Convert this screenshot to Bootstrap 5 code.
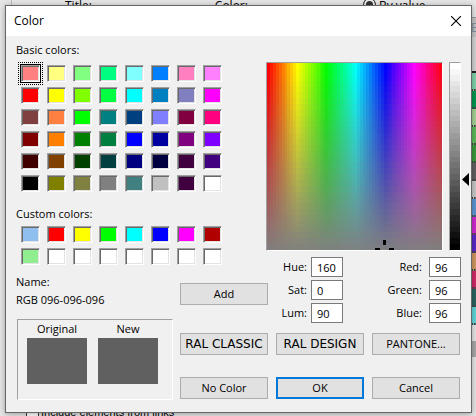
<!DOCTYPE html>
<html lang="en">
<head>
<meta charset="utf-8">
<meta name="viewport" content="width=device-width, initial-scale=1">
<title>Color</title>
<link href="https://cdn.jsdelivr.net/npm/bootstrap@5.3.0/dist/css/bootstrap.min.css" rel="stylesheet">
<style>
body{font:11px/16px "Open Sans","Noto Sans",sans-serif;color:#000;background:#e6e6e6}
.backdrop-app{height:100vh;min-height:416px}
.app-top{height:48px;border-left:1px solid #bbb;margin-left:11px;padding-left:53px;margin-right:5px}
.app-top .gap-a{margin-left:123px}
.app-top label{font-size:12px;line-height:11px}
.app-top .form-check-input{width:13px;height:13px;margin:-2px 3px 0 0;border:1px solid #333;background:#333;box-shadow:inset 0 0 0 2px #eee}
.by{margin-left:115px}
.app-list{width:5px;padding-top:17px}
.app-list .hd{height:20px;background:#c4c4c4;color:#8090a0;overflow:hidden;font-size:12px;line-height:20px;border-top:1px solid #999}
.app-list .sp{height:36px;border-bottom:2px solid #222;background:#d4d4d4}
.app-list i{display:block;height:18px;border-bottom:2px dotted #444}
.app-list .bar{height:16px;margin-top:16px;background:#a8a8a8}
.app-foot{padding-left:26px;overflow:hidden;height:10px}
.app-foot label{font:11px/13px "Liberation Sans",sans-serif}
.app-foot .form-check-input{width:13px;height:13px;margin:0 2px 0 0;border:1px solid #333;border-radius:0}
.dialog{position:absolute;inset:5px 4px auto 5px;border:1px solid #666;background:#f0f0f0;box-shadow:0 1px 6px #0005}
.titlebar{height:30px;font-size:12px;padding:0 10px 0 8px}
.titlebar button{line-height:0}
.dbody{padding:6px 10px 12px 10px}
.left{width:157px;margin-right:7px}
.swatches{display:grid;grid-template-columns:repeat(8,19px);gap:5px 7px;padding-left:5px}
.sw,.sunk{border:1px solid;border-color:#a0a0a0 #fff #fff #a0a0a0}
.sw{position:relative;height:17px;padding:0;border-radius:0;box-shadow:inset 1px 1px #696969,inset -1px -1px #e3e3e3}
.sw.on{outline:1px solid #000}
.sw.on::after{content:"";position:absolute;inset:-4px;border:1px dotted #000}
.t7{margin-top:7px}.t14{margin-top:14px}.t4{margin-top:4px}.t9{margin-top:9px}.t2{margin-top:2px}.t11{margin-top:11px}
.preview{height:81px;margin-left:1px;padding:1px 14px 0 9px;gap:11px}
.preview .fill{height:46px;background:#606060;margin-top:1px}
.pick{margin-top:20px;gap:6px}
.spectrum{position:relative;width:177px;height:189px}
.spectrum canvas,.lum canvas{display:block;width:100%;height:100%;image-rendering:pixelated}
.spectrum svg{position:absolute;right:46px;bottom:0}
.lum{position:relative;width:12px;height:189px}
.lum svg{position:absolute;left:12px;top:110px}
.fields{margin-top:6px}
.fields .btn{margin-top:26px}
.fld{display:grid;grid-template-columns:39px 32px;gap:3px 4px;line-height:20px;text-align:right}
.fld.rgb{column-gap:7px}
.fld input{width:32px;height:20px;padding:0 0 0 5px;border:1px solid #7a7a7a;border-radius:0;background:#fff;font-size:11px;line-height:18px;min-height:0;color:#000}
.btn.b{width:100%;height:22px;padding:0;border:1px solid #adadad;border-radius:0;background:#e1e1e1;color:#000;font-size:11px;line-height:20px;white-space:nowrap}
.btn.b.add{width:88px}
.btn.b.wide{font:12px/20px "DejaVu Sans",sans-serif}
.btn.b.ok{border:2px solid #0078d7;line-height:18px}
.acts{display:grid;grid-template-columns:repeat(3,1fr);gap:22px 8px;margin-top:10px;padding-right:1px}
</style>
<script src="https://cdn.jsdelivr.net/npm/bootstrap@5.3.0/dist/js/bootstrap.bundle.min.js"></script>
</head>
<body>
<div class="backdrop-app d-flex overflow-hidden">
  <div class="flex-grow-1 d-flex flex-column justify-content-between">
    <div class="app-top d-flex align-items-start">
      <label>Title:</label><label class="gap-a">Color:</label>
      <div class="by d-flex"><input class="form-check-input" type="radio" id="byv" checked><label for="byv">By value</label></div>
    </div>
    <div class="app-foot d-flex"><input class="form-check-input" type="checkbox" id="inc"><label for="inc">Include elements from links</label></div>
  </div>
  <div class="app-list" id="list"><div class="hd">E</div><div class="sp"></div></div>
</div>

<main class="dialog" role="dialog" aria-labelledby="ttl">
  <div class="titlebar bg-white d-flex align-items-center justify-content-between">
    <span id="ttl">Color</span>
    <button class="border-0 bg-transparent p-0" aria-label="Close"><svg width="10" height="10" viewBox="0 0 10 10"><path d="M0 0l10 10M10 0L0 10" stroke="#000" stroke-width="1.1"/></svg></button>
  </div>
  <div class="dbody d-flex">
    <section class="left flex-shrink-0">
      <div>Basic colors:</div>
      <div class="swatches t7" id="basic"></div>
      <div class="t14">Custom colors:</div>
      <div class="swatches t4" id="custom"></div>
      <div class="t9">Name:</div>
      <div class="t2">RGB 096-096-096</div>
      <div class="preview sunk d-flex t11 text-center">
        <div class="flex-fill w-50">Original<div class="fill"></div></div>
        <div class="flex-fill w-50">New<div class="fill"></div></div>
      </div>
    </section>
    <section class="flex-grow-1">
      <div class="pick d-flex justify-content-end">
        <div class="spectrum sunk"><canvas id="spec" width="60" height="32"></canvas>
          <svg width="22" height="12" viewBox="0 0 22 12"><path d="M9 2h3v5H9zM1 10h5v2H1zM15 10h5v2h-5z"/></svg></div>
        <div class="lum sunk"><canvas id="lum" width="1" height="32"></canvas>
          <svg width="7" height="13" viewBox="0 0 7 13"><path d="M7 0v13L0 6.500z"/></svg></div>
      </div>
      <div class="fields d-flex align-items-start">
        <button class="btn b add">Add</button>
        <div class="fld">
          <label for="h">Hue:</label><input class="form-control" id="h" value="160">
          <label for="s">Sat:</label><input class="form-control" id="s" value="0">
          <label for="l">Lum:</label><input class="form-control" id="l" value="90">
        </div>
        <div class="fld rgb ms-auto">
          <label for="r">Red:</label><input class="form-control" id="r" value="96">
          <label for="g">Green:</label><input class="form-control" id="g" value="96">
          <label for="b">Blue:</label><input class="form-control" id="b" value="96">
        </div>
      </div>
      <div class="acts">
        <button class="btn b wide">RAL CLASSIC</button><button class="btn b wide">RAL DESIGN</button><button class="btn b">PANTONE...</button>
        <button class="btn b">No Color</button><button class="btn b ok">OK</button><button class="btn b">Cancel</button>
      </div>
    </section>
  </div>
</main>
<script>
const basic='ff8080 ffff80 80ff80 00ff80 80ffff 0080ff ff80c0 ff80ff ff0000 ffff00 80ff00 00ff40 00ffff 0080c0 8080c0 ff00ff 804040 ff8040 00ff00 008080 004080 8080ff 800040 ff0080 800000 ff8000 008000 008040 0000ff 0000a0 800080 8000ff 400000 804000 004000 004040 000080 000040 400040 400080 000000 808000 808040 808080 408080 c0c0c0 400040 ffffff';
const custom='8fbfef ff0000 ffff00 00ff00 00ffff 0000ff ff00ff b00000 90ee90 ffffff ffffff ffffff ffffff ffffff ffffff ffffff';
function fill(id,list){
  for(const c of list.split(' ')){
    const b=document.createElement('button');
    b.className='sw';b.style.backgroundColor='#'+c;b.setAttribute('aria-label','#'+c);
    document.getElementById(id).append(b);
  }
}
fill('basic',basic);fill('custom',custom);
document.querySelector('#basic .sw').classList.add('on');
const list=document.getElementById('list');
for(const c of '7fd4aa 009850 a4d193 5abb58 3a9a3a 606060 c8c8c8 5a96d4 d028d0 5c28c8 d09860 d02868 2a6460 60d8d8'.split(' ')){
  const i=document.createElement('i');i.style.backgroundColor='#'+c;list.append(i);
}
list.insertAdjacentHTML('beforeend','<div class="bar"></div>');
const s=document.getElementById('spec').getContext('2d'),l=document.getElementById('lum').getContext('2d');
for(let y=0;y<32;y++){
  for(let x=0;x<60;x++){s.fillStyle=`hsl(${x*6},${100-y*100/32}%,50%)`;s.fillRect(x,y,1,1);}
  l.fillStyle=`hsl(0,0%,${100-y*100/31}%)`;l.fillRect(0,y,1,1);
}
</script>
</body>
</html>
